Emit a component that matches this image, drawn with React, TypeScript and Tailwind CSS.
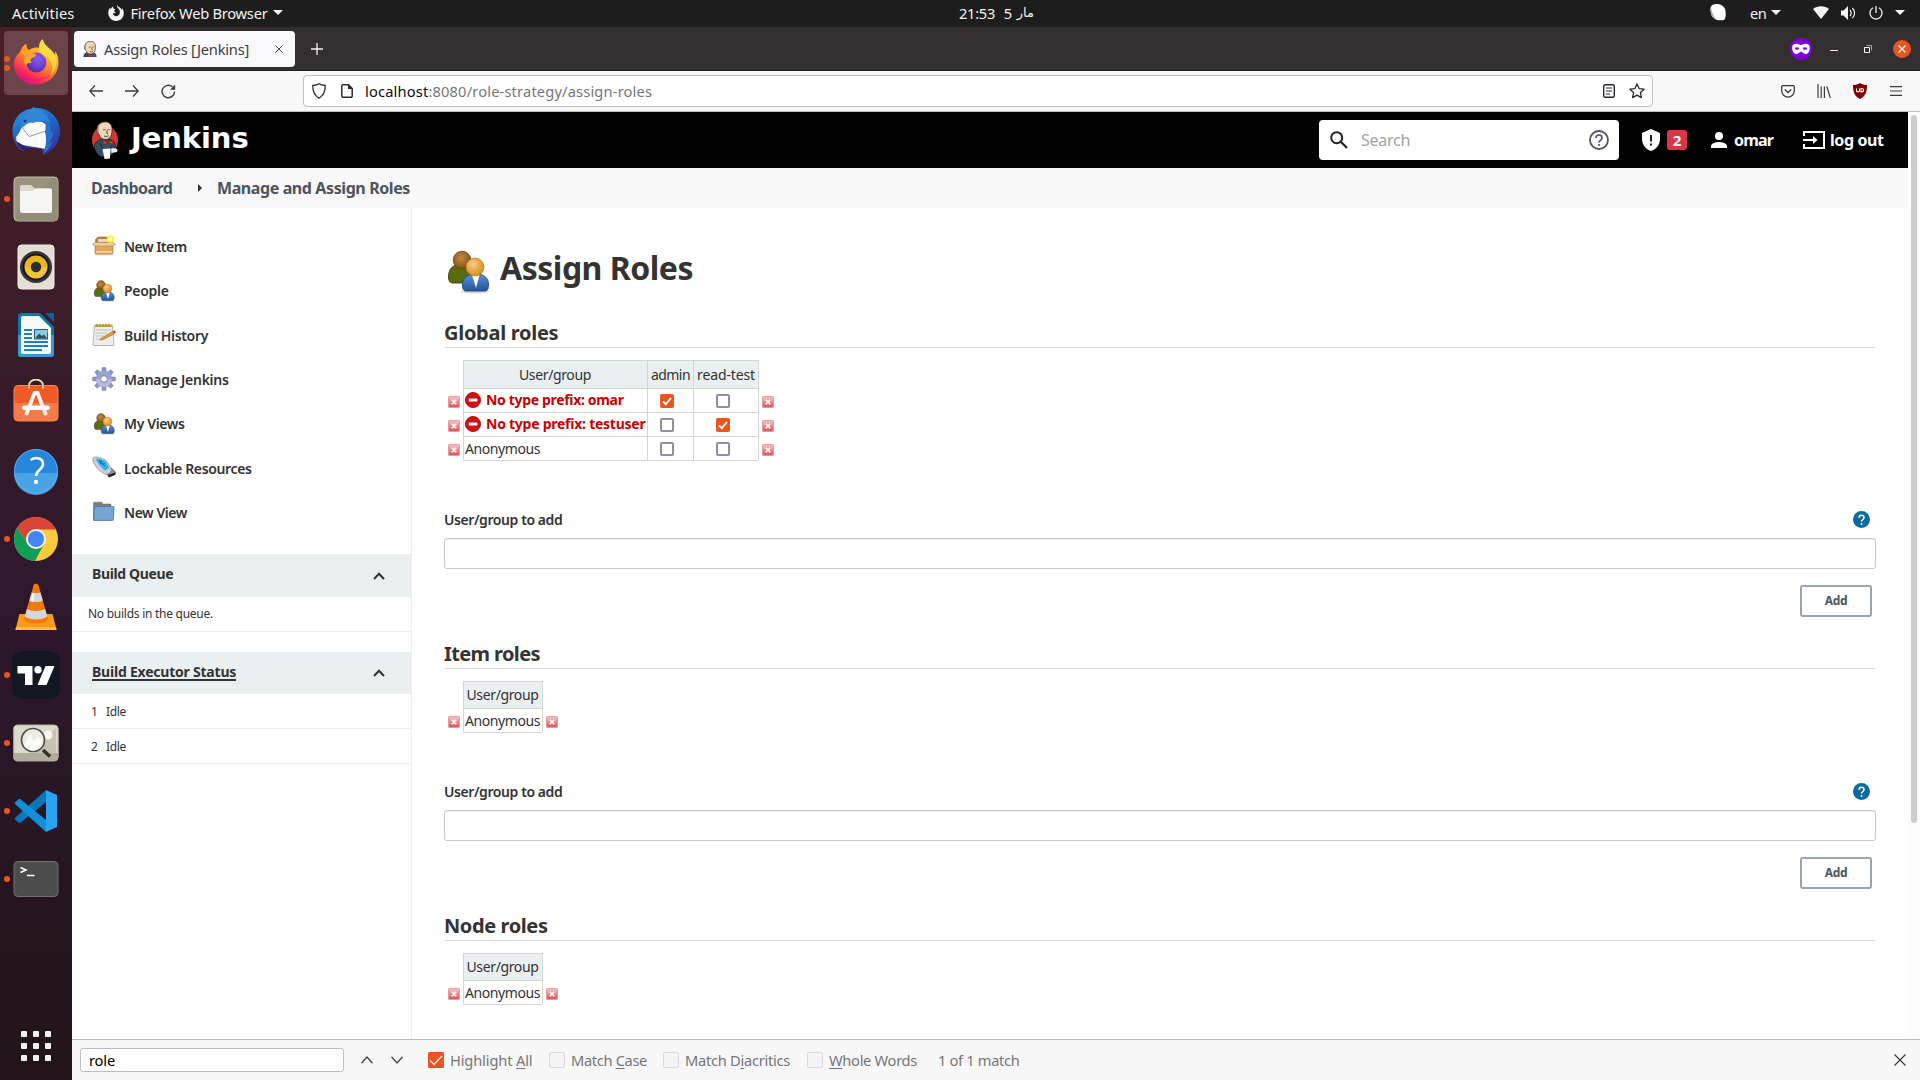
import type { ReactNode } from 'react';

/* ---------- Dock icons ---------- */

function FirefoxIcon() {
  return (
    <svg viewBox="0 0 48 48" className="-mt-0.5 h-12 w-12">
      <defs>
        <linearGradient id="ffBody" x1="0.8" y1="0.05" x2="0.25" y2="0.95">
          <stop offset="0" stopColor="#fff44f" />
          <stop offset="0.3" stopColor="#ffb42c" />
          <stop offset="0.6" stopColor="#ff6b30" />
          <stop offset="0.85" stopColor="#f5255c" />
          <stop offset="1" stopColor="#e0128a" />
        </linearGradient>
        <radialGradient id="ffGlobe" cx="0.6" cy="0.3" r="0.8">
          <stop offset="0" stopColor="#8a5cf5" />
          <stop offset="0.6" stopColor="#6a3bd0" />
          <stop offset="1" stopColor="#45278d" />
        </radialGradient>
      </defs>
      <path
        d="M30.500 1c-3 3-4 6-3 9-4-1-8 0-10.500 2-2-1.500-3-4-2.500-6.500-3 1.500-5.500 5-6.500 8.500C3.500 18 1.500 23 2 28c1 10.500 10 18.500 22 18.500S46 37 46.500 26c.2-5-1-10-3.500-13 .3 1.500.3 3 0 4-2.500-6-11-8.500-12.500-16z"
        fill="url(#ffBody)"
      />
      <path d="M31 2c1 7 9 9 12 16 3 8 0 16-5 20 4-7 3-14-2-18-4-3-9-4-9-10 0-3 2-6 4-8z" fill="#ffe04a" opacity=".75" />
      <circle cx="24.300" cy="24.500" r="10" fill="url(#ffGlobe)" />
      <path d="M8 14c4-3 9-2 12 1 3 0 4.500 1 4 2.500-1 2-4 2-5 3.500-1 2 0 3 1 4-4-.5-6 .5-6 3-3-3-3-8 0-10-2-1-4-2-6-4z" fill="#ffa42c" />
      <path d="M7 36c8 6 20 8 32 0-5 7-24 11-32 0z" fill="#e3157b" opacity=".6" />
    </svg>
  );
}

function ThunderbirdIcon() {
  return (
    <svg viewBox="0 0 48 48" className="h-12 w-12">
      <defs>
        <linearGradient id="tbBody" x1="0.2" y1="0" x2="0.7" y2="1">
          <stop offset="0" stopColor="#2a93e0" />
          <stop offset="0.5" stopColor="#1f63c4" />
          <stop offset="1" stopColor="#34339b" />
        </linearGradient>
      </defs>
      <path d="M14 3C5 7 0 16 .5 25c.3 9 5 17 12 20l-2-5 20 2 .5 6C42 44 48 35 48 24 48 10 36 .5 24 1l-3-1-1 1.500z" fill="url(#tbBody)" />
      <path d="M4 30c4-3 6-14 12-16l14 1 5 3-1 24L5 37z" fill="#fbfbfd" />
      <path d="M9 19l8 10.500L34 24" fill="none" stroke="#9a9aa6" strokeWidth="1" />
      <path d="M10 21c-1-8 4-16 11-19 9 1 15 6 17 14-5-3-12-2-17 0-5-1-7 2-11 5z" fill="#3288d6" />
      <path d="M32 12c5 3 8 8 6 14l3-2c0 6-2 9-5 13l4-2c-1 5-5 9-9 12 3-7 4-15 2-22 1-5 1-9-1-13z" fill="#2773c8" />
      <path d="M4 34l12 7-3 4c-4-3-8-6-9-11z" fill="#352069" />
      <circle cx="13" cy="14" r="1.500" fill="#123f6e" />
    </svg>
  );
}

function FilesIcon() {
  return (
    <svg viewBox="0 0 48 48" className="h-12 w-12">
      <rect x="2" y="2" width="44" height="44" rx="4" fill="#9c947f" stroke="#c3bda9" />
      <path d="M3 40L40 3h3a3 3 0 0 1 3 3v37a3 3 0 0 1-3 3H5z" fill="#8e8772" opacity=".6" />
      <path d="M8 12a2 2 0 0 1 2-2h9l4 3.500h15a2 2 0 0 1 2 2V20H8z" fill="#dedad0" />
      <path d="M8 16h13l3-2.500h14a2 2 0 0 1 2 2V36a2 2 0 0 1-2 2H10a2 2 0 0 1-2-2z" fill="#f7f6f5" />
    </svg>
  );
}

function RhythmboxIcon() {
  return (
    <svg viewBox="0 0 48 48" className="h-12 w-12">
      <rect x="6" y="2" width="36" height="44" rx="3.500" fill="#e3ded4" stroke="#f3f0ea" />
      <circle cx="24" cy="24" r="16" fill="#35343c" />
      <circle cx="24" cy="24" r="12.500" fill="#eab420" stroke="#17171c" strokeWidth="2" />
      <path d="M13 24a11 11 0 0 0 22 0z" fill="#f6c84a" opacity=".7" />
      <circle cx="24" cy="24" r="5.200" fill="#2c2c2c" />
    </svg>
  );
}

function WriterIcon() {
  return (
    <svg viewBox="0 0 48 48" className="h-12 w-12">
      <path d="M9 2h19l14 14v27a3 3 0 0 1-3 3H9a3 3 0 0 1-3-3V5a3 3 0 0 1 3-3z" fill="#1174a8" />
      <path d="M6 24h36v19a3 3 0 0 1-3 3H9a3 3 0 0 1-3-3z" fill="#3a97cf" />
      <path d="M33 2h8a1 1 0 0 1 1 1v8z" fill="#0d6796" />
      <path d="M11 5h16l12 12v24a2 2 0 0 1-2 2H11a2 2 0 0 1-2-2V7a2 2 0 0 1 2-2z" fill="#f7fafc" />
      <path d="M12 19h8M12 23h8M12 27h8M12 31h24M12 35h24M12 39h18" stroke="#1a82bd" strokeWidth="2" />
      <rect x="22.500" y="18.500" width="13" height="9.500" fill="#86cbe9" stroke="#16658f" />
      <path d="M23 27.500l4-5 3 2.500 2-1.500 3 4z" fill="#454a4a" />
      <path d="M32 19h3.500v3.500z" fill="#f7c52e" />
    </svg>
  );
}

function SoftwareIcon() {
  return (
    <svg viewBox="0 0 48 48" className="h-12 w-12">
      <path d="M17 8V6.500a7 6 0 0 1 14 0V8" fill="none" stroke="#f2dcae" strokeWidth="1.800" />
      <rect x="2" y="6.500" width="44" height="35.500" rx="4" fill="#ee5a28" stroke="#f58a5c" />
      <path d="M2.500 24h43v14a4 4 0 0 1-4 4h-35a4 4 0 0 1-4-4z" fill="#f37b49" />
      <path d="M17 7v2.500M31 7v2.500" stroke="#f2dcae" strokeWidth="1.800" />
      <path d="M14 36l8.500-22h3L34 36" fill="none" stroke="#fdf3ee" strokeWidth="3.800" />
      <rect x="10" y="26.500" width="28" height="4.500" rx="2.200" fill="#fff" />
    </svg>
  );
}

function HelpDockIcon() {
  return (
    <svg viewBox="0 0 48 48" className="h-12 w-12">
      <circle cx="24" cy="24" r="22" fill="#2487dc" />
      <path d="M2 26a22 22 0 0 0 44 0z" fill="#48a2e6" />
      <circle cx="24" cy="24" r="21.500" fill="none" stroke="#67b4ee" strokeWidth=".8" />
      <path d="M18.500 13c6-4 12.500-1.500 12.500 4 0 5.500-7 6-7 12" fill="none" stroke="#fff" strokeWidth="2.600" />
      <circle cx="24" cy="35" r="2.200" fill="#fff" />
    </svg>
  );
}

function ChromeIcon() {
  return (
    <svg viewBox="0 0 48 48" className="h-12 w-12">
      <circle cx="24" cy="24" r="22" fill="#fccb3c" />
      <path d="M4.950 13A22 22 0 0 1 43.050 13L43.500 14.500H24A9.500 9.500 0 0 0 15.800 28.700z" fill="#db4437" />
      <path d="M4.950 13A22 22 0 0 0 23 46l9.200-17.250A9.500 9.500 0 0 1 15.800 28.750z" fill="#0f9d58" />
      <circle cx="24" cy="24" r="10" fill="#f1f1f1" />
      <circle cx="24" cy="24" r="8" fill="#4285f4" />
    </svg>
  );
}

function VlcIcon() {
  return (
    <svg viewBox="0 0 48 48" className="h-12 w-12">
      <path d="M7.500 31h33L44.500 46.500h-41z" fill="#fb9a18" />
      <path d="M4 44h40l.5 3h-41z" fill="#ffbe35" />
      <path d="M21.500 2.500c0-2.200 5-2.200 5 0L36 36c0 6-24 6-24 0z" fill="#f07a08" />
      <path d="M19.700 9.500c2.500 1 6.200 1 8.700 0l2.400 8c-3.500 2-10 2-13.500 0zM15 26c4 2.500 14 2.500 18 0l2.300 7.500c-5 4-17.500 4-22.500 0z" fill="#d5d6d8" />
      <path d="M20.500 10l-2 8 3 .8 1-8.500z" fill="#f5f5f5" />
    </svg>
  );
}

function TradingViewIcon() {
  return (
    <svg viewBox="0 0 48 48" className="h-12 w-12">
      <rect width="48" height="48" rx="10" fill="#131722" />
      <path d="M5.500 15h15v19h-7.500V22.500H5.500z" fill="#fff" />
      <circle cx="26" cy="18.700" r="3.700" fill="#fff" />
      <path d="M33.500 15H42.500L34.500 34H25.500z" fill="#fff" />
    </svg>
  );
}

function ImageViewerIcon() {
  return (
    <svg viewBox="0 0 48 48" className="h-12 w-12">
      <rect x="1.700" y="6" width="44.500" height="36" rx="4" fill="#dddacd" stroke="#b5b1a2" />
      <path d="M24 34L44 8v26z" fill="#c6c2b2" />
      <path d="M2 34h44v4a4 4 0 0 1-4 4H6a4 4 0 0 1-4-4z" fill="#b2ad9b" />
      <circle cx="36" cy="16" r="4.500" fill="#f6f5f0" />
      <circle cx="21" cy="21" r="11.500" fill="#eceae3" stroke="#4e4e4c" strokeWidth="1.700" />
      <path d="M12 27l6-12 4 7 4-5 5 8c-3 7-13 10-19 2z" fill="#fff" opacity=".75" />
      <path d="M31 31l7 6.500" stroke="#33322f" strokeWidth="3.500" />
    </svg>
  );
}

function VsCodeIcon() {
  return (
    <svg viewBox="0 0 48 48" className="h-12 w-12">
      <path d="M34 3L3.500 30.500c-.8.800-.8 1.800 0 2.500l2.800 2.500c.8.600 1.800.600 2.500 0L34 15z" fill="#0877b9" />
      <path d="M34 45L3.500 17.500c-.8-.8-.8-1.800 0-2.500l2.800-2.500c.8-.6 1.800-.6 2.500 0L34 33z" fill="#1190d8" />
      <path d="M34 3l11 5v32l-11 5z" fill="#2aa3f2" />
    </svg>
  );
}

function TerminalIcon() {
  return (
    <svg viewBox="0 0 48 48" className="h-12 w-12">
      <rect x="2" y="6.500" width="44" height="35" rx="4" fill="#4c4c4c" stroke="#737373" />
      <path d="M8.500 12.500l5.500 2.500-5.500 2.500M15 20.500h7.500" fill="none" stroke="#fff" strokeWidth="1.500" />
    </svg>
  );
}

type DockItem = { name: string; icon: ReactNode; dots: number; active?: boolean };

const dockItems: DockItem[] = [
  { name: 'firefox', icon: <FirefoxIcon />, dots: 2, active: true },
  { name: 'thunderbird', icon: <ThunderbirdIcon />, dots: 0 },
  { name: 'files', icon: <FilesIcon />, dots: 1 },
  { name: 'rhythmbox', icon: <RhythmboxIcon />, dots: 0 },
  { name: 'writer', icon: <WriterIcon />, dots: 0 },
  { name: 'software', icon: <SoftwareIcon />, dots: 0 },
  { name: 'help', icon: <HelpDockIcon />, dots: 0 },
  { name: 'chrome', icon: <ChromeIcon />, dots: 1 },
  { name: 'vlc', icon: <VlcIcon />, dots: 0 },
  { name: 'tradingview', icon: <TradingViewIcon />, dots: 1 },
  { name: 'images', icon: <ImageViewerIcon />, dots: 1 },
  { name: 'vscode', icon: <VsCodeIcon />, dots: 1 },
  { name: 'terminal', icon: <TerminalIcon />, dots: 1 },
];

function Dock() {
  return (
    <aside className="flex w-[72px] shrink-0 flex-col bg-linear-to-b from-[#481f25] via-[#2e182c] via-55% to-[#20141a] pt-0.5">
      {dockItems.map((item) => (
        <div key={item.name} className="flex h-[68px] items-center">
          <div
            className={
              item.active
                ? 'relative ml-1 flex h-16 w-16 items-center justify-center rounded bg-[#6b4549]'
                : 'relative ml-1 flex h-16 w-16 items-center justify-center'
            }
          >
            {item.icon}
            <div className="absolute inset-y-0 left-0 flex flex-col justify-center gap-[3px]">
              {Array.from({ length: item.dots }, (_, i) => (
                <span key={i} className="h-1.5 w-1.5 rounded-full bg-[#e95420]" />
              ))}
            </div>
          </div>
        </div>
      ))}
      <div className="mx-auto mt-auto mb-[19px] grid grid-cols-3 gap-1.5">
        {Array.from({ length: 9 }, (_, i) => (
          <span key={i} className="h-1.5 w-1.5 rounded-[1px] bg-[#f2f1f0]" />
        ))}
      </div>
    </aside>
  );
}

/* ---------- Desktop top bar ---------- */

function Caret() {
  return (
    <svg viewBox="0 0 10 5" className="h-[5px] w-[10px]">
      <path d="M0 0h10L5 5z" fill="#f2f2f2" />
    </svg>
  );
}

function TopBar() {
  return (
    <header className="flex h-[27px] items-center bg-[#1d1d1d] pb-0.5 text-[14.67px] text-[#f2f2f2]">
      <div className="flex w-[959px] items-center pl-3">
        <span className="tracking-[0.14px]">Activities</span>
        <svg viewBox="0 0 16 16" className="ml-[34px] h-4 w-4">
          <path
            d="M9.500 0c-.6 1.200-.5 2 .2 2.800C11.500 4.500 12 6 11.800 8c-.3 2-2 3.300-4 3.200C6 11 4.800 9.600 5 8c1 .6 2 .3 2.800-.5C6.500 7 6 6.300 6.200 5.500c.6-.7 1-.9 1-1.400L5.300 3.400 5 1.600C3.800 2.300 3.300 3 3 4L1.800 3C.3 5 .1 7 .3 9c.6 4 3.800 7 7.800 7 4.400 0 7.700-3.400 7.700-7.700 0-2-.6-3.700-1.700-5.200l-.1 1.700C12.500 2.200 10 2.500 9.500 0z"
            fill="#f2f2f2"
          />
        </svg>
        <span className="ml-[6px] mr-[6px] tracking-[-0.25px]">Firefox Web Browser</span>
        <Caret />
      </div>
      <div className="flex w-[75px] items-center justify-between">
        <span className="tracking-[-0.3px]">21:53</span>
        <span className="ml-1">5</span>
        <span className="font-['DejaVu_Sans',sans-serif] text-[13px]">مار</span>
      </div>
      <div className="flex flex-1 items-center justify-end pr-[15px]">
        <svg viewBox="0 0 16 17" className="h-[17px] w-4">
          <path d="M4 .5C8-1 15 1 15.500 7c.3 3 .5 6-1 8.500-2 1.500-8 1-10.500-1S.5 9 .4 6C.3 3 1 1 4 .5z" fill="#fff" />
          <path d="M1 3c1 6 3 11 7 13-4-1-6-3-7-6z" fill="#a9adb0" />
        </svg>
        <span className="ml-6 mr-[5px] w-4 tracking-[-0.5px]">en</span>
        <Caret />
        <svg viewBox="0 0 16 13" className="ml-[32px] h-[13px] w-4">
          <path d="M0 3C4-.8 12-.8 16 3L8 13z" fill="#f2f2f2" />
        </svg>
        <svg viewBox="0 0 15 14" className="ml-3 h-[14px] w-[15px]">
          <path d="M0 4.500h2.500L7 0v14L2.500 9.500H0z" fill="#f2f2f2" />
          <path d="M9 4c1.500 1.500 1.500 4.500 0 6M11.300 2c3 2.500 3 7.500 0 10" fill="none" stroke="#f2f2f2" strokeWidth="1.200" />
        </svg>
        <svg viewBox="0 0 14 14" className="ml-[13px] h-[14px] w-[14px]">
          <path d="M4 1.800a6 6 0 1 0 6 0M7 0v7" fill="none" stroke="#f2f2f2" strokeWidth="1.300" />
        </svg>
        <span className="ml-3">
          <Caret />
        </span>
      </div>
    </header>
  );
}

/* ---------- Browser chrome ---------- */

function JenkinsFace() {
  return (
    <>
      <path d="M4 6C5 1.500 9 0 13 .5c4 .5 6 4 5.500 9 0 4-2 8-6 8.500-4 0-6-2-7-5C4 12 3 10 3.500 9z" fill="#f0d6b7" stroke="#3a2f28" strokeWidth=".9" />
      <path d="M3.800 10.500C2.800 7 3.800 4 6 2.500 5.300 4.500 5.400 6.500 5 9L5.500 12.500z" fill="#8d8b89" />
      <path d="M9.500 8.500c.8-.6 1.800-.6 2.500 0M14 8.500c.7-.5 1.600-.5 2.200 0M13.500 9v3l1.200.3M10.500 14.500c1.500.7 3 .5 4.500-.2" fill="none" stroke="#3a2f28" strokeWidth=".9" />
    </>
  );
}

function Favicon() {
  return (
    <svg viewBox="0 0 22 22" className="h-4 w-4">
      <path d="M2 22c0-4 2-6 5-6.500h8c3 .5 5 2.500 5 6.500z" fill="#30475e" />
      <JenkinsFace />
      <path d="M9 18l4 2 4-2v4l-4-1.500L9 22z" fill="#d33833" />
    </svg>
  );
}

function JenkinsLogo() {
  return (
    <svg viewBox="0 0 26 38" className="h-[38px] w-[26px]">
      <ellipse cx="13" cy="19" rx="13" ry="14.500" fill="#d33833" />
      <path d="M2.500 24c1-3 4-5 7-6l9 .5c3 1 4.500 3.500 5 7l-3 8-11 2.500C4 33 2 28 2.500 24z" fill="#335061" stroke="#10171c" strokeWidth=".7" />
      <g transform="translate(1.500 .500)">
        <JenkinsFace />
      </g>
      <path d="M11 19l5 2.500 5-3v5l-5-1.500-5 2z" fill="#d33833" stroke="#6d1512" strokeWidth=".5" />
      <path d="M8 22l4 8M19 24l1 6" stroke="#162633" strokeWidth=".8" />
      <path d="M10.500 28l8-.5-.5 10-5.500.5z" fill="#fff" />
      <path d="M19 27.500c3-.5 6-.5 6.500 1.500l-.5 2-5.500 1z" fill="#e9eef0" />
    </svg>
  );
}

function TabStrip() {
  return (
    <div className="flex h-11 shrink-0 items-center border-b border-[#1f1d1e] bg-[#332f31] pl-0.5">
      <div className="flex h-9 w-[221px] items-center rounded bg-[#f9f9fb] pl-2">
        <Favicon />
        <span className="ml-1.5 w-[171px] text-[14.67px] tracking-[-0.22px] whitespace-nowrap text-[#3d3c43]">Assign Roles [Jenkins]</span>
        <svg viewBox="0 0 8 8" className="h-2 w-2">
          <path d="M.4.400l7.200 7.200M7.600.4L.4 7.600" stroke="#47464c" strokeWidth="1" />
        </svg>
      </div>
      <svg viewBox="0 0 12 12" className="ml-4 h-3 w-3">
        <path d="M6 0v12M0 6h12" stroke="#f4f4f4" strokeWidth="1.300" />
      </svg>
      <div className="ml-auto flex items-center pr-[9px]">
        <svg viewBox="0 0 22 22" className="h-[22px] w-[22px]">
          <circle cx="11" cy="11" r="11" fill="#8000d7" />
          <path d="M2.200 9.500c0-3 2-4 4.500-3.800C9 5.800 9.500 7 11 7s2-1.200 4.300-1.300c2.500-.2 4.500.8 4.500 3.800 0 4-1.500 6.500-4.500 6.500-2 0-3-2.200-4.300-2.200S8.700 16 6.700 16c-3 0-4.500-2.500-4.500-6.500z" fill="#fff" />
          <ellipse cx="7" cy="10.500" rx="2" ry="1.300" fill="#8000d7" />
          <ellipse cx="15" cy="10.500" rx="2" ry="1.300" fill="#8000d7" />
        </svg>
        <span className="mt-1 ml-[18px] h-px w-2 bg-[#f4f4f4]" />
        <svg viewBox="0 0 8 8" className="ml-[26px] h-2 w-2">
          <path d="M.5 2.500h5v5h-5z" fill="none" stroke="#fff" />
          <path d="M2.500.500h5v5" fill="none" stroke="#a8a6a7" />
        </svg>
        <svg viewBox="0 0 18 18" className="ml-[21px] h-[18px] w-[18px]">
          <circle cx="9" cy="9" r="9" fill="#e95420" />
          <path d="M5.500 5.500l7 7M12.500 5.500l-7 7" stroke="#fff" strokeWidth="1.200" />
        </svg>
      </div>
    </div>
  );
}

function NavBar() {
  return (
    <div className="flex h-[41px] shrink-0 items-center border-b border-[#bdbdbf] bg-[#f8f8f8] pr-[18px] pl-[17px] text-[#3b3b3f]">
      <svg viewBox="0 0 14 12" className="h-3 w-[14px]">
        <path d="M6 .500L.8 6 6 11.500M1 6h13" fill="none" stroke="currentColor" strokeWidth="1.300" />
      </svg>
      <svg viewBox="0 0 14 12" className="ml-[22px] h-3 w-[14px]">
        <path d="M8 .500L13.200 6 8 11.500M13 6H0" fill="none" stroke="currentColor" strokeWidth="1.300" />
      </svg>
      <svg viewBox="0 0 15 15" className="ml-[22px] h-[15px] w-[15px]">
        <path d="M13.500 7.500a6.200 6.200 0 1 1-2-4.600" fill="none" stroke="currentColor" strokeWidth="1.400" />
        <path d="M14.200.500v5.200H9z" fill="currentColor" />
      </svg>
      <div className="ml-[127px] flex h-8 w-[1350px] items-center rounded border border-[#bfbfc2] bg-white pr-[7px] pl-2">
        <svg viewBox="0 0 14 16" className="h-4 w-[14px]">
          <path d="M7 .700c2 1.300 4 1.600 6.200 1.800.2 5.500-1 9.500-6.200 12.800C1.800 12 .6 8 .8 2.500 3 2.300 5 2 7 .700z" fill="none" stroke="#2b2a33" strokeWidth="1.300" strokeLinejoin="round" />
        </svg>
        <svg viewBox="0 0 12 14" className="ml-[15px] h-[14px] w-3">
          <path d="M2 .800h5.500L11.200 4.500V12a1.200 1.200 0 0 1-1.200 1.200H2A1.200 1.200 0 0 1 .8 12V2A1.200 1.200 0 0 1 2 .8z" fill="none" stroke="#2b2a33" strokeWidth="1.500" />
          <path d="M7 .500V5h4.500z" fill="#2b2a33" />
        </svg>
        <span className="ml-3 text-[14.67px] tracking-[0.16px] text-[#76767b]">
          <span className="text-[#0c0c0d]">localhost</span>:8080/role-strategy/assign-roles
        </span>
        <svg viewBox="0 0 12 14" className="ml-auto h-[14px] w-3">
          <rect x=".7" y=".7" width="10.600" height="12.600" rx="1.500" fill="none" stroke="#2b2a33" strokeWidth="1.400" />
          <path d="M3 4h6M3 7h6M3 10h4" stroke="#2b2a33" strokeWidth="1.200" />
        </svg>
        <svg viewBox="0 0 16 16" className="ml-[14px] h-4 w-4">
          <path d="M8 1l2.100 4.600 5 .6-3.700 3.400 1 5L8 12.100l-4.400 2.500 1-5L.9 6.200l5-.6z" fill="none" stroke="#2b2a33" strokeWidth="1.300" strokeLinejoin="round" />
        </svg>
      </div>
      <div className="ml-auto flex items-center">
        <svg viewBox="0 0 14 13" className="h-[13px] w-[14px]">
          <path d="M1.800.700h10.400a1.100 1.100 0 0 1 1.100 1.100v4a6.300 6.300 0 0 1-12.600 0v-4A1.100 1.100 0 0 1 1.800.7z" fill="none" stroke="currentColor" strokeWidth="1.300" />
          <path d="M3.800 4.500L7 7.500l3.200-3" fill="none" stroke="currentColor" strokeWidth="1.400" />
        </svg>
        <svg viewBox="0 0 14 14" className="ml-[22px] h-[14px] w-[14px]">
          <path d="M1 0v14M4.200 2.500V14M7.400 2.500V14M9.800 2.500L13.400 14" fill="none" stroke="currentColor" strokeWidth="1.200" />
        </svg>
        <svg viewBox="0 0 14 16" className="ml-[22px] h-4 w-[14px]">
          <path d="M7 0c2 1.400 4.500 2 7 2 0 6-1 11-7 14C1 13 0 8 0 2c2.500 0 5-.6 7-2z" fill="#800000" />
          <path d="M3.500 5.500v2.200c0 1.600 3 1.600 3 0V5.500M8 5.500v3.400h.8c2.400 0 2.400-3.400 0-3.400z" fill="none" stroke="#fff" strokeWidth="1.100" />
        </svg>
        <svg viewBox="0 0 12 10" className="ml-[23px] h-[10px] w-3">
          <path d="M0 .600h12M0 5h12M0 9.400h12" stroke="currentColor" strokeWidth="1.200" />
        </svg>
      </div>
    </div>
  );
}

/* ---------- Jenkins page header ---------- */

function JenkinsHeader() {
  return (
    <div className="flex h-14 shrink-0 items-center bg-black pr-6 pl-5 text-white">
      <JenkinsLogo />
      <span className="ml-[13px] pb-1 font-['DejaVu_Sans',sans-serif] text-[29px] leading-none font-bold tracking-[-0.1px]">Jenkins</span>
      <div className="ml-auto flex h-10 w-[300px] items-center rounded bg-white pr-2.5 pl-[11px]">
        <svg viewBox="0 0 18 18" className="h-[18px] w-[18px]">
          <circle cx="6.700" cy="6.700" r="5.500" fill="none" stroke="#222" strokeWidth="2" />
          <path d="M10.800 10.800L17 17" stroke="#222" strokeWidth="2.200" />
        </svg>
        <span className="ml-[13px] text-base tracking-[-0.27px] text-[#a0a3a6]">Search</span>
        <svg viewBox="0 0 20 20" className="ml-auto h-5 w-5">
          <circle cx="10" cy="10" r="9" fill="none" stroke="#4d545d" strokeWidth="1.800" />
          <path d="M7 8c0-4 6-4 6 0 0 2-3 2.200-3 4.500" fill="none" stroke="#4d545d" strokeWidth="1.700" />
          <circle cx="10" cy="15" r="1.100" fill="#4d545d" />
        </svg>
      </div>
      <svg viewBox="0 0 18 22" className="ml-[23px] h-[22px] w-[18px]">
        <path d="M9 0l9 4v6c0 5.500-3.800 10.500-9 12-5.200-1.500-9-6.500-9-12V4z" fill="#fff" />
        <path d="M9 6v6.500M9 14.500v2" stroke="#000" strokeWidth="1.800" />
      </svg>
      <span className="ml-[7px] flex h-5 w-5 items-center justify-center rounded-[3px] bg-[#dc3545] text-[15px] font-bold">2</span>
      <svg viewBox="0 0 16 16" className="ml-6 h-4 w-4">
        <circle cx="8" cy="4" r="4" fill="#fff" />
        <path d="M0 16v-2c0-2.700 5.300-4 8-4s8 1.300 8 4v2z" fill="#fff" />
      </svg>
      <span className="ml-[7px] w-10 text-base font-bold tracking-[-0.83px]">omar</span>
      <svg viewBox="0 0 22 18" className="ml-[29px] h-[18px] w-[22px]">
        <path d="M1 5V1h20v16H1v-4" fill="none" stroke="#fff" strokeWidth="2" />
        <path d="M0 9h13" stroke="#fff" strokeWidth="2" />
        <path d="M10 5l4.500 4-4.500 4z" fill="#fff" />
      </svg>
      <span className="ml-[5px] w-[54px] text-base font-bold tracking-[-0.4px] whitespace-nowrap">log out</span>
    </div>
  );
}

function Breadcrumbs() {
  return (
    <nav className="flex h-10 shrink-0 items-center bg-[#f8f8f8] pl-5 text-base font-bold text-[#4d545d]">
      <span className="-ml-px w-[107px] tracking-[-0.55px]">Dashboard</span>
      <svg viewBox="0 0 4 8" className="h-2 w-1">
        <path d="M0 0l4 4-4 4z" fill="#333" />
      </svg>
      <span className="ml-[15px] tracking-[-0.4px]">Manage and Assign Roles</span>
    </nav>
  );
}

/* ---------- Side panel ---------- */

function PeopleIcon({ className, id }: { className: string; id: string }) {
  return (
    <svg viewBox="0 0 48 48" className={className}>
      <defs>
        <radialGradient id={id + 'a'} cx="0.45" cy="0.4" r="0.6">
          <stop offset="0" stopColor="#c88a3c" />
          <stop offset="1" stopColor="#80511a" />
        </radialGradient>
        <radialGradient id={id + 'b'} cx="0.4" cy="0.35" r="0.65">
          <stop offset="0" stopColor="#f9cd8b" />
          <stop offset="1" stopColor="#dd8c17" />
        </radialGradient>
        <linearGradient id={id + 'c'} x1="0" y1="0" x2="0" y2="1">
          <stop offset="0" stopColor="#5b92d3" />
          <stop offset="1" stopColor="#24539a" />
        </linearGradient>
      </defs>
      <ellipse cx="31" cy="45.500" rx="14" ry="2" fill="#000" opacity=".15" />
      <path d="M4.500 31c0-8 4-12 10-12s12 3 13 9l-2 9H8c-2.500-.5-3.500-3-3.500-6z" fill="#5a6b10" stroke="#36420a" strokeWidth=".9" />
      <circle cx="18" cy="14" r="8.800" fill={'url(#' + id + 'a)'} stroke="#6a4515" strokeWidth=".8" />
      <path d="M18.500 39c0-7 4-11 13-11s13 4 13 11c0 4-1 6-4 6h-18c-3 0-4-2-4-6z" fill={'url(#' + id + 'c)'} stroke="#1d4683" strokeWidth=".9" />
      <path d="M28 29h7.500L32 42z" fill="#fff" />
      <circle cx="31" cy="21" r="9" fill={'url(#' + id + 'b)'} stroke="#b77316" strokeWidth=".7" />
    </svg>
  );
}

const small = 'h-6 w-6 shrink-0';

function BoxIcon() {
  return (
    <svg viewBox="0 0 24 24" className={small}>
      <ellipse cx="12" cy="20.500" rx="10" ry="1.300" fill="#000" opacity=".12" />
      <path d="M3.500 5.500L6 3h12l2.500 2.500V9h-17z" fill="#b08348" stroke="#8d6430" strokeWidth=".5" />
      <path d="M6 5h11v3H6z" fill="#ead6b3" />
      <path d="M3 8.500h18v10.500a1 1 0 0 1-1 1H4a1 1 0 0 1-1-1z" fill="#dfa860" stroke="#a9722d" strokeWidth=".6" />
      <path d="M3 8.500L.4 10.500 3 12h18l2.600-1.500L21 8.500z" fill="#f2cc94" stroke="#b27f3c" strokeWidth=".5" />
      <path d="M4 17h16v2H4z" fill="#f1cb8f" />
      <circle cx="18.500" cy="5" r="3.800" fill="#fff14a" />
      <circle cx="18.500" cy="5" r="1.600" fill="#fffde0" />
    </svg>
  );
}

function NotepadIcon() {
  return (
    <svg viewBox="0 0 24 24" className={small}>
      <path d="M2.500 3h18l1.500 18a1 1 0 0 1-1 1.500H2a1 1 0 0 1-1-1.500z" fill="#ededeb" stroke="#a4a4a0" strokeWidth=".8" />
      <path d="M2.500 1.500h18V4h-18z" fill="#c3b23b" />
      <path d="M5 .800v3M8 .8v3M11 .8v3M14 .8v3M17 .8v3" stroke="#857718" strokeWidth=".9" />
      <path d="M4 7h15M4 10h11M4 13h8M4 16h5" stroke="#b9b9b6" strokeWidth=".9" />
      <path d="M9 15.500L20.500 8.500l2 2.200L11 16.500l-3 .5z" fill="#e7a13c" stroke="#8c5a16" strokeWidth=".6" />
      <path d="M20.300 8.600l2-1.100c1.300.2 1.700 1.500.8 2.700l-1 .6z" fill="#dd3b3b" />
    </svg>
  );
}

function GearIcon() {
  const teeth = [0, 45, 90, 135, 180, 225, 270, 315];
  return (
    <svg viewBox="0 0 24 24" className={small}>
      <g fill="#8b9ac4" stroke="#6574a3" strokeWidth=".5">
        {teeth.map((a) => (
          <path key={a} d="M9.700 5l.6-4.400h3.400l.6 4.400z" transform={`rotate(${a} 12 12)`} />
        ))}
      </g>
      <circle cx="12" cy="12" r="8" fill="#98a5cd" />
      <path d="M4 12a8 8 0 0 0 16 0z" fill="#b9b8dc" />
      <circle cx="12" cy="12" r="3.300" fill="#fff" stroke="#7280ad" strokeWidth=".9" />
    </svg>
  );
}

function UsbIcon() {
  return (
    <svg viewBox="0 0 24 24" className={small}>
      <path d="M13.500 15.500l6-3.500 4.200 4.500-7 4.500z" fill="#8d8f92" stroke="#3c3d40" strokeWidth=".6" />
      <path d="M16 19l7.500-2.500v2.300L17 21.500z" fill="#222" />
      <path d="M.8 4C.5 1.500 2 .8 4.500 1c4 .5 8 2 10.500 4.500l4.500 8c-.5 2.500-3 4.500-5.500 5C8 16 2 10 .8 4z" fill="#c9ced8" stroke="#82899a" strokeWidth=".7" />
      <path d="M4 2.500c4 0 8 1.500 10 3.500l3 6-4 2.500C9 11 5 7 4 2.500z" fill="#2eb0ec" />
      <path d="M7 4.500l6 5.500M9 4.500l-.5 3M11 8.500l1.500-1.500" stroke="#135a8c" strokeWidth="1" />
    </svg>
  );
}

function FolderIcon() {
  return (
    <svg viewBox="0 0 24 24" className={small}>
      <path d="M1.500 3a.8.800 0 0 1 .8-.8h7.500l1 1.800h7.400a.8.800 0 0 1 .8.800V20H1.500z" fill="#7e7f7c" stroke="#60615e" strokeWidth=".5" />
      <path d="M3.500 6.500h17.800a.8.800 0 0 1 .8.900l-.6 12a1 1 0 0 1-1 1H1.600l.9-13a1 1 0 0 1 1-.9z" fill="#77a3d5" stroke="#3f6fa8" strokeWidth=".7" />
    </svg>
  );
}

const tasks: { label: string; icon: ReactNode; tracking: string }[] = [
  { label: 'New Item', icon: <BoxIcon />, tracking: 'tracking-[-0.52px]' },
  { label: 'People', icon: <PeopleIcon className={small} id="people" />, tracking: 'tracking-[-0.3px]' },
  { label: 'Build History', icon: <NotepadIcon />, tracking: 'tracking-[-0.3px]' },
  { label: 'Manage Jenkins', icon: <GearIcon />, tracking: 'tracking-[-0.27px]' },
  { label: 'My Views', icon: <PeopleIcon className={small} id="views" />, tracking: 'tracking-[-0.38px]' },
  { label: 'Lockable Resources', icon: <UsbIcon />, tracking: 'tracking-[-0.35px]' },
  { label: 'New View', icon: <FolderIcon />, tracking: 'tracking-[-0.45px]' },
];

function Chevron() {
  return (
    <svg viewBox="0 0 12 8" className="h-2 w-3">
      <path d="M1 7l5-5.200L11 7" fill="none" stroke="#333" strokeWidth="2" />
    </svg>
  );
}

function SidePanel() {
  return (
    <aside className="w-[340px] shrink-0 border-r border-[#eaeff2] pt-4 text-sm text-[#333]">
      {tasks.map((t) => (
        <div key={t.label} className="flex h-[44.33px] items-center pl-5 font-semibold">
          {t.icon}
          <span className={'ml-2 pt-0.5 ' + t.tracking}>{t.label}</span>
        </div>
      ))}
      <div className="mt-5 flex h-[43px] items-center justify-between bg-[#eaeff2] pr-[26px] pl-5 font-bold">
        <span className="pb-1 tracking-[-0.36px]">Build Queue</span>
        <Chevron />
      </div>
      <div className="flex h-[35px] items-center border-b border-[#eaeff2] pl-4 text-xs tracking-[-0.26px]">No builds in the queue.</div>
      <div className="mt-5 flex h-[42px] items-center justify-between bg-[#eaeff2] pr-[26px] pl-5 font-bold">
        <span className="pb-0.5 tracking-[-0.22px] underline decoration-2 underline-offset-2">Build Executor Status</span>
        <Chevron />
      </div>
      {[1, 2].map((n) => (
        <div key={n} className="flex h-[35px] items-center border-b border-[#eaeff2] pt-0.5 pl-[19px] text-xs">
          <span className="w-[15px]">{n}</span>
          <span className="tracking-[-0.33px]">Idle</span>
        </div>
      ))}
    </aside>
  );
}

/* ---------- Role tables ---------- */

function RemoveButton() {
  return (
    <svg viewBox="0 0 12 12" className="mt-2 h-3 w-3">
      <defs>
        <linearGradient id="removeBg" x1="0" y1="0" x2="0" y2="1">
          <stop offset="0" stopColor="#f6c6c7" />
          <stop offset="1" stopColor="#dc5057" />
        </linearGradient>
      </defs>
      <rect x=".5" y=".5" width="11" height="11" rx=".8" fill="url(#removeBg)" stroke="#e79a9d" />
      <path d="M3.800 3.800l4.400 4.400M8.200 3.800L3.800 8.200" stroke="#fff" strokeWidth="1.600" />
    </svg>
  );
}

function Checkbox({ checked }: { checked: boolean }) {
  return checked ? (
    <svg viewBox="0 0 14 14" className="h-[14px] w-[14px]">
      <rect width="14" height="14" rx="2" fill="#e95420" />
      <path d="M3 7.500L5.800 10.200 11 4" fill="none" stroke="#fff" strokeWidth="1.900" />
    </svg>
  ) : (
    <span className="h-[14px] w-[14px] rounded-[2px] border-2 border-[#8f8f9d] bg-white" />
  );
}

type Row = { name: string; error?: boolean; tracking: string; checks: boolean[] };

const colWidths = ['w-[46px]', 'w-[65px]'];

function TableFoot({ width, cols }: { width: string; cols: number }) {
  return (
    <div className="flex h-px">
      <span className="w-[19px]" />
      <span className={width + ' bg-[#d3d7cf]'} />
      {colWidths.slice(0, cols).map((w) => (
        <span key={w} className={w + ' bg-[#d3d7cf]'} />
      ))}
    </div>
  );
}

type TableProps = {
  width: string;
  headerHeight: string;
  columns: { name: string; tracking: string }[];
  rows: Row[];
};

function RoleTable({ width, headerHeight, columns, rows }: TableProps) {
  const line = 'flex items-center border-t border-l border-[#d3d7cf] ';
  return (
    <div className="mt-3 text-sm text-[#333]">
      <div className={'flex ' + headerHeight}>
        <span className="w-[19px]" />
        <div className={line + width + ' justify-center bg-[#eaeff2] pr-px tracking-[-0.37px]'}>User/group</div>
        {columns.map((c, i) => (
          <div key={c.name} className={line + colWidths[i] + ' justify-center bg-[#eaeff2] ' + c.tracking}>
            {c.name}
          </div>
        ))}
        <span className="w-px bg-[#d3d7cf]" />
      </div>
      {rows.map((r) => (
        <div key={r.name} className="flex h-6">
          <span className="w-[19px] pl-1">
            <RemoveButton />
          </span>
          <div className={line + width + ' pl-px whitespace-nowrap'}>
            {r.error ? (
              <span className="flex items-center pb-0.5 font-bold text-[#c00]">
                <svg viewBox="0 0 16 16" className="mr-[5px] h-4 w-4">
                  <circle cx="8" cy="8" r="7.600" fill="#d40d12" stroke="#9b0c10" strokeWidth=".8" />
                  <rect x="3.700" y="6.500" width="8.600" height="3" rx=".6" fill="#fff" />
                </svg>
                <span className={r.tracking}>{r.name}</span>
              </span>
            ) : (
              <span className={'pt-px ' + r.tracking}>{r.name}</span>
            )}
          </div>
          {r.checks.map((c, i) => (
            <div key={i} className={line + colWidths[i] + (i === 0 ? ' pt-px pl-3' : ' pt-px pl-[22px]')}>
              <Checkbox checked={c} />
            </div>
          ))}
          <span className="w-px bg-[#d3d7cf]" />
          <span className="pl-[3px]">
            <RemoveButton />
          </span>
        </div>
      ))}
      <TableFoot width={width} cols={columns.length} />
    </div>
  );
}

function Section({ title, tracking, children }: { title: string; tracking: string; children: ReactNode }) {
  return (
    <section>
      <h2 className={'flex h-8 items-center border-b border-[#dcdcdc] pt-0.5 text-xl font-bold text-[#333] ' + tracking}>{title}</h2>
      {children}
      <div className="mt-[47px] flex h-6 items-center justify-between pr-1.5 text-sm font-semibold text-[#333]">
        <span className="tracking-[-0.42px]">User/group to add</span>
        <svg viewBox="0 0 17 17" className="mb-0.5 h-[17px] w-[17px]">
          <circle cx="8.500" cy="8.500" r="8.500" fill="#0b6aa2" />
          <path d="M6 6.700c0-3.300 5-3.300 5 0 0 1.700-2.500 1.900-2.500 3.900" fill="none" stroke="#fff" strokeWidth="1.500" />
          <circle cx="8.500" cy="13" r="1" fill="#fff" />
        </svg>
      </div>
      <div className="mt-1.5 h-[31px] rounded-[3px] border border-[#c8c8c8] bg-white shadow-[inset_0_1px_1px_rgba(0,0,0,0.07)]" />
      <div className="mt-4 mb-5 flex justify-end pr-1">
        <button className="h-8 w-[72px] rounded-[3px] border-2 border-[#98a4ae] pb-px text-xs font-bold tracking-[-0.4px] text-[#4d545d]">Add</button>
      </div>
    </section>
  );
}

const anonymous: Row = { name: 'Anonymous', tracking: 'tracking-[-0.42px]', checks: [] };

function MainPanel() {
  return (
    <main className="h-full flex-1 overflow-hidden pr-8 pl-8">
      <div className="flex h-[108px] items-start pt-[38px]">
        <PeopleIcon className="h-12 w-12" id="heading" />
        <h1 className="-mt-0.5 ml-2 text-[32px] font-bold tracking-[-0.49px] text-[#333]">Assign Roles</h1>
      </div>
      <Section title="Global roles" tracking="tracking-[-0.28px]">
        <RoleTable
          width="w-[184px]"
          headerHeight="h-[28px]"
          columns={[
            { name: 'admin', tracking: 'tracking-[-0.56px]' },
            { name: 'read-test', tracking: 'tracking-[-0.12px]' },
          ]}
          rows={[
            { name: 'No type prefix: omar', error: true, tracking: 'tracking-[-0.33px]', checks: [true, false] },
            { name: 'No type prefix: testuser', error: true, tracking: 'tracking-[-0.25px]', checks: [false, true] },
            { ...anonymous, checks: [false, false] },
          ]}
        />
      </Section>
      <Section title="Item roles" tracking="tracking-[-0.61px]">
        <RoleTable width="w-[79px]" headerHeight="h-[27px]" columns={[]} rows={[anonymous]} />
      </Section>
      <Section title="Node roles" tracking="tracking-[-0.4px]">
        <RoleTable width="w-[79px]" headerHeight="h-[27px]" columns={[]} rows={[anonymous]} />
      </Section>
    </main>
  );
}

/* ---------- Find bar ---------- */

function FindOption({ checked, className, children }: { checked?: boolean; className: string; children: ReactNode }) {
  return (
    <label className={'flex shrink-0 items-center whitespace-nowrap ' + className}>
      {checked ? (
        <svg viewBox="0 0 16 16" className="mr-1.5 h-4 w-4">
          <rect width="16" height="16" rx="1.500" fill="#e95420" />
          <path d="M2 8.500L6 12.500 14 4" fill="none" stroke="#fff" strokeWidth="1.100" />
        </svg>
      ) : (
        <span className="mr-1.5 h-4 w-4 rounded-[2px] border border-[#d9d9d9] bg-[#f4f4f4]" />
      )}
      <span>{children}</span>
    </label>
  );
}

function FindBar() {
  const key = 'underline underline-offset-2';
  return (
    <footer className="flex h-[41px] shrink-0 items-center border-t border-[#bdbdbf] bg-[#f7f7f7] pl-2 text-[14.67px] text-[#76767a]">
      <div className="flex h-6 w-[264px] items-center rounded-[3px] border border-[#bdbdc0] bg-white pl-2 tracking-[-0.17px] text-black">role</div>
      <svg viewBox="0 0 12 8" className="ml-[17px] h-2 w-3">
        <path d="M.5 7.300L6 1l5.500 6.300" fill="none" stroke="#444" strokeWidth="1.300" />
      </svg>
      <svg viewBox="0 0 12 8" className="ml-[18px] h-2 w-3">
        <path d="M.5.700L6 7 11.500.7" fill="none" stroke="#444" strokeWidth="1.300" />
      </svg>
      <FindOption checked className="ml-[25px] w-[121px] tracking-[-0.15px]">
        Highlight <span className={key}>A</span>ll
      </FindOption>
      <FindOption className="w-[114px] tracking-[-0.35px]">
        Match <span className={key}>C</span>ase
      </FindOption>
      <FindOption className="w-[144px] tracking-[-0.28px]">
        Match D<span className={key}>i</span>acritics
      </FindOption>
      <FindOption className="w-[131px] tracking-[-0.31px]">
        <span className={key}>W</span>hole Words
      </FindOption>
      <span className="tracking-[-0.33px]">1 of 1 match</span>
      <svg viewBox="0 0 12 12" className="mr-[14px] ml-auto h-3 w-3">
        <path d="M.5.500l11 11M11.500.5l-11 11" stroke="#3b3b3f" strokeWidth="1.200" />
      </svg>
    </footer>
  );
}

export default function App() {
  return (
    <div className="flex h-[1080px] w-[1920px] flex-col overflow-hidden bg-white font-['Noto_Sans','Open_Sans',sans-serif]">
      <TopBar />
      <div className="flex min-h-0 flex-1">
        <Dock />
        <div className="flex min-w-0 flex-1 flex-col">
          <TabStrip />
          <NavBar />
          <div className="flex min-h-0 flex-1">
            <div className="flex min-w-0 flex-1 flex-col">
              <JenkinsHeader />
              <Breadcrumbs />
              <div className="flex min-h-0 flex-1">
                <SidePanel />
                <MainPanel />
              </div>
            </div>
            <div className="w-3 bg-[#fdfdfd] px-[3px] pt-[3px]">
              <div className="h-[708px] w-[6px] rounded-full bg-[#cdcdcd]" />
            </div>
          </div>
          <FindBar />
        </div>
      </div>
    </div>
  );
}
